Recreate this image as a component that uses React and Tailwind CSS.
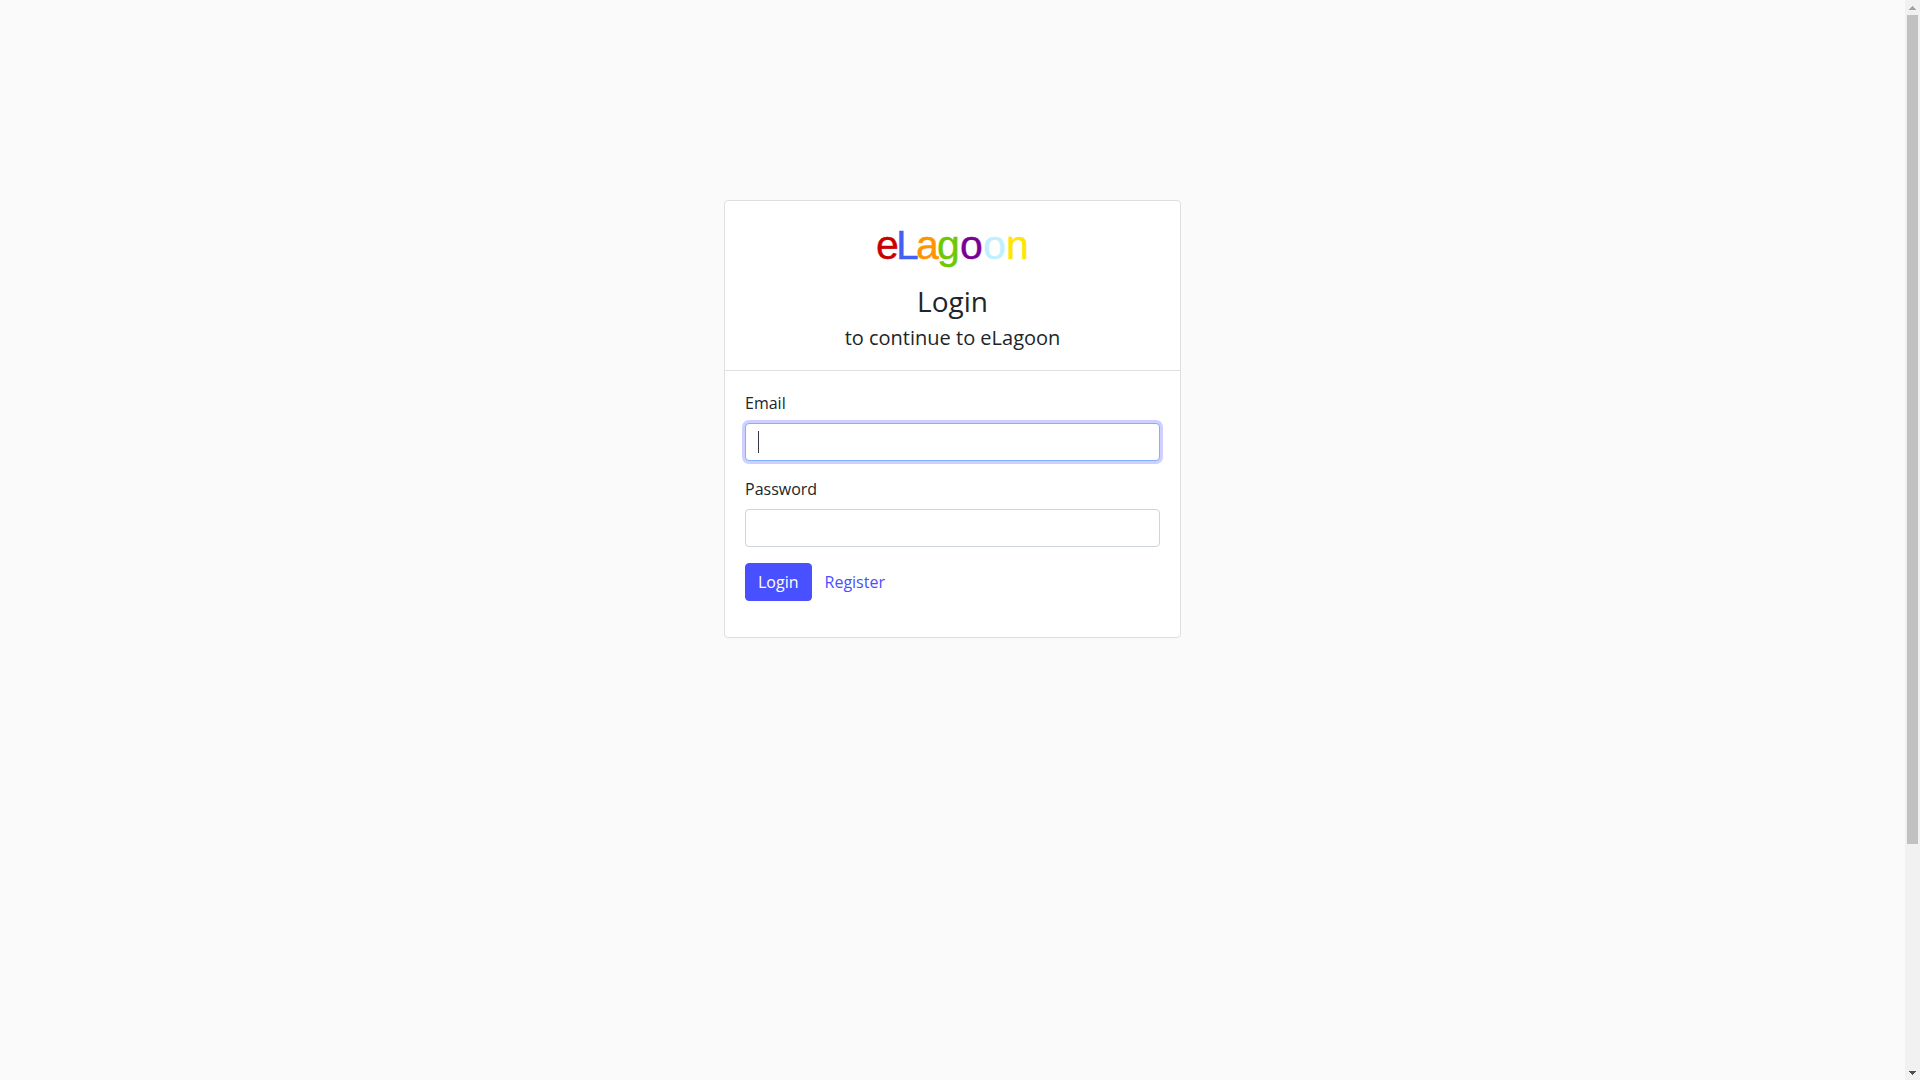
const LETTERS = [
  { char: 'e', x: 1, color: '#c80000' },
  { char: 'L', x: 21, color: '#4560f0' },
  { char: 'a', x: 41, color: '#ff9400' },
  { char: 'g', x: 62, color: '#70c800' },
  { char: 'o', x: 85, color: '#780096' },
  { char: 'o', x: 108, color: '#bff0ff' },
  { char: 'n', x: 131, color: '#ffe600' },
];

function Logo() {
  return (
    <svg
      width="156"
      height="63"
      viewBox="0 0 156 63"
      role="img"
      aria-label="eLagoon"
      className="mx-auto block font-['Liberation_Sans',sans-serif] text-[41px]"
    >
      <text y="38" strokeWidth="0.4">
        {LETTERS.map((l) => (
          <tspan key={l.x} x={l.x} fill={l.color} stroke={l.color}>
            {l.char}
          </tspan>
        ))}
      </text>
    </svg>
  );
}

function Field({ id, label, type, active }) {
  return (
    <div className="mb-4">
      <label htmlFor={id} className="mb-2 block">
        {label}
      </label>
      <div className="relative">
        <input
          id={id}
          name={id}
          type={type}
          className={
            active
              ? 'block h-[38px] w-full rounded border border-[#80b0ff] bg-white px-3 text-[#495057] caret-transparent ring-3 ring-[#cfd0ff] outline-none'
              : 'block h-[38px] w-full rounded border border-[#ced4da] bg-white px-3 text-[#495057] outline-none'
          }
        />
        {active && (
          <span
            aria-hidden="true"
            className="pointer-events-none absolute inset-y-2 left-[13px] w-px bg-[#343a40]"
          />
        )}
      </div>
    </div>
  );
}

function Scrollbar() {
  return (
    <div
      aria-hidden="true"
      className="sticky top-0 flex h-screen w-[15px] shrink-0 flex-col items-center bg-[#f1f1f1]"
    >
      <div className="flex h-[15px] shrink-0 items-center">
        <svg width="7" height="4" viewBox="0 0 7 4" fill="#a3a3a3" shapeRendering="crispEdges">
          <path d="M3 0h1v1h1v1h1v1h1v1H0V3h1V2h1V1h1z" />
        </svg>
      </div>
      <div className="grid w-full flex-1 grid-rows-[829fr_221fr] px-[2px]">
        <div className="bg-[#c1c1c1]" />
      </div>
      <div className="flex h-[15px] shrink-0 items-center">
        <svg width="7" height="4" viewBox="0 0 7 4" fill="#505050" shapeRendering="crispEdges">
          <path d="M0 0h7v1H6v1H5v1H4v1H3V3H2V2H1V1H0z" />
        </svg>
      </div>
    </div>
  );
}

export default function App() {
  return (
    <div className="flex min-h-screen items-start bg-[#fafafa] font-['Open_Sans',sans-serif] text-base text-[#212529]">
      <main className="flex flex-1 justify-center pt-[200px]">
        <section className="w-full max-w-[457px] rounded border border-[#dfdfdf] bg-white">
          <header className="border-b border-[#dfdfdf] p-5 text-center">
            <Logo />
            <h1 className="mb-2 text-[28px] leading-[34px]">Login</h1>
            <h2 className="text-xl leading-6">to continue to eLagoon</h2>
          </header>
          <form className="p-5" onSubmit={(e) => e.preventDefault()}>
            <Field id="email" label="Email" type="email" active />
            <Field id="password" label="Password" type="password" />
            <div className="mb-4 flex">
              <button
                type="submit"
                className="h-[38px] rounded border border-[#4950ff] bg-[#4950ff] px-3 text-white"
              >
                Login
              </button>
              <a href="#register" className="px-[13px] py-[7px] text-[#4950ff]">
                Register
              </a>
            </div>
          </form>
        </section>
      </main>
      <Scrollbar />
    </div>
  );
}
